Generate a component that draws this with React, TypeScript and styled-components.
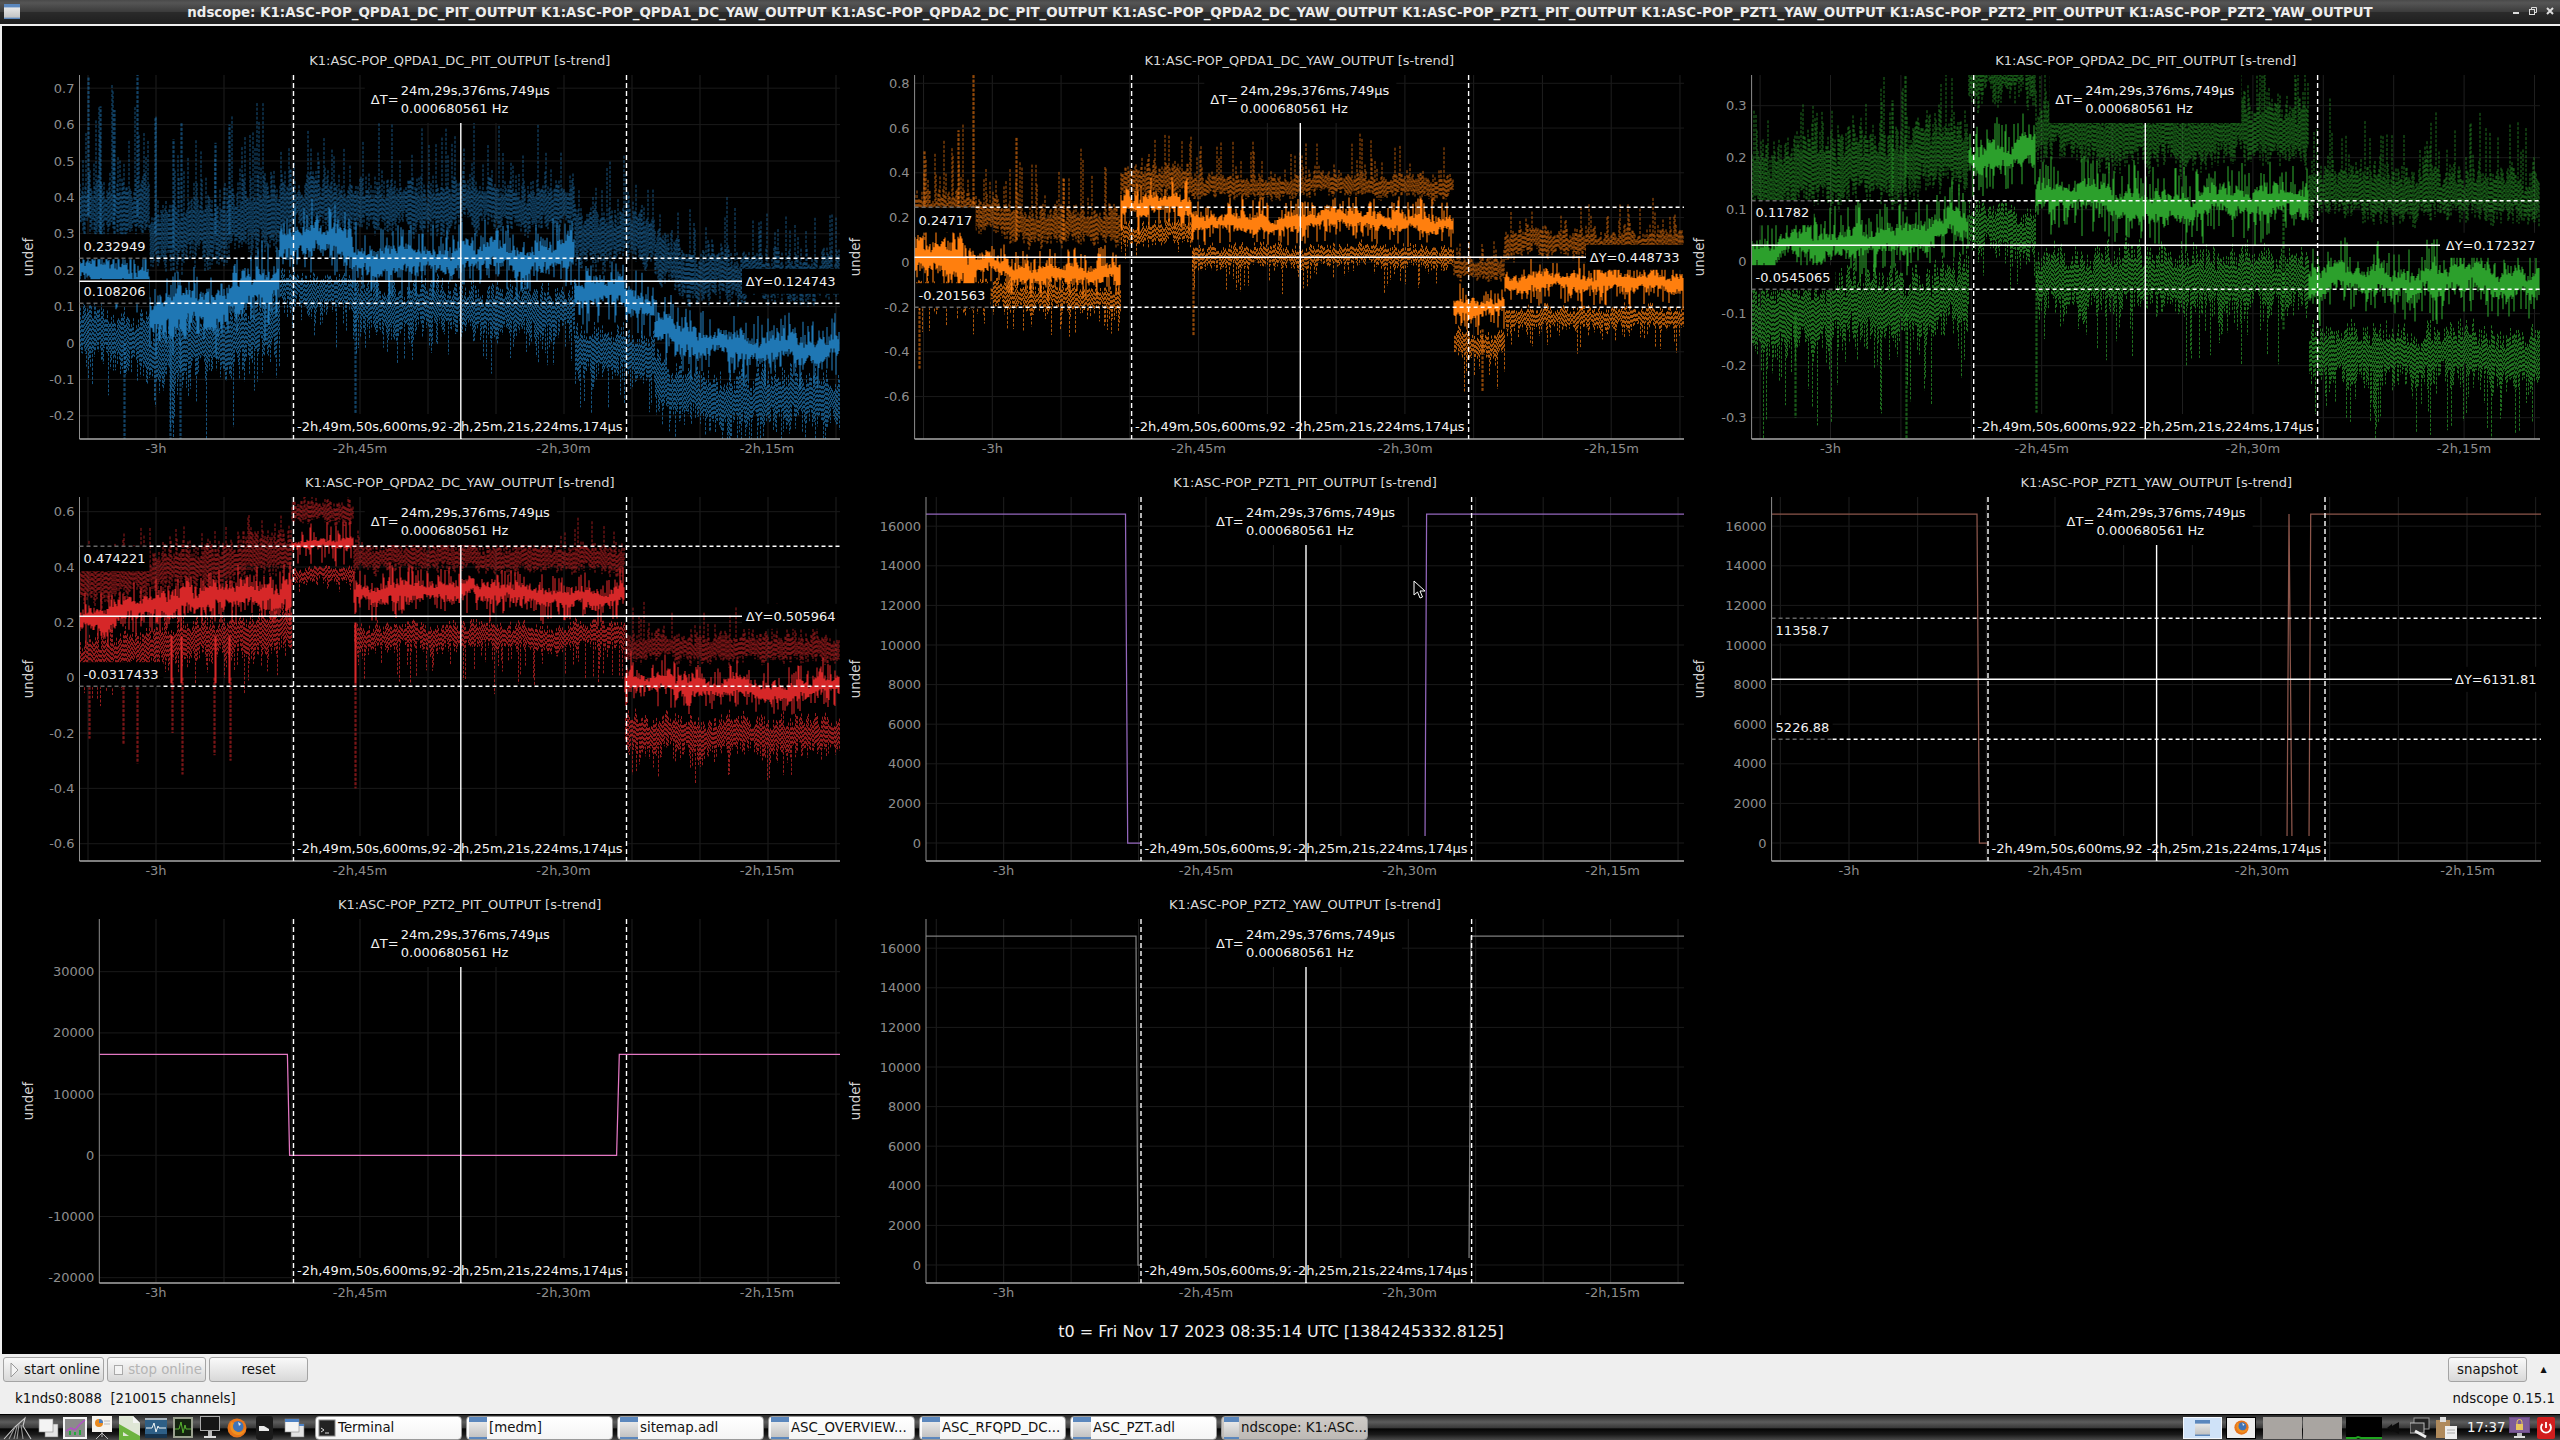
import React, { useMemo } from "react";
import styled, { createGlobalStyle } from "styled-components";

const FONT = `"DejaVu Sans", "Liberation Sans", sans-serif`;

const Global = createGlobalStyle`
  html, body { margin: 0; padding: 0; background: #000; }
  #root { width: 2560px; height: 1440px; overflow: hidden; }
`;

const Page = styled.div`
  position: relative;
  width: 2560px;
  height: 1440px;
  display: flex;
  flex-direction: column;
  font-family: ${FONT};
  font-size: 13.33px;
  background: #000;
`;

/* ---------- window title bar ---------- */
const TitleBar = styled.header`
  height: 24px;
  flex: none;
  display: flex;
  align-items: center;
  justify-content: center;
  position: relative;
  background: linear-gradient(#4a4a4a 0, #555 12%, #3c3c3c 48%, #2a2a2a 52%, #1f1f1f 100%);
  color: #ededed;
  font-weight: bold;
  font-size: 13.39px;
  white-space: nowrap;
  border-bottom: 2px solid #efefef;
`;
const TitleIcon = styled.div`
  position: absolute;
  left: 4px;
  top: 4px;
  line-height: 0;
`;
const WindowButtons = styled.div`
  position: absolute;
  right: 6px;
  top: 7px;
  display: flex;
  gap: 9px;
  align-items: center;
  line-height: 0;
`;

/* ---------- plot grid ---------- */
const Scope = styled.main`
  flex: none;
  height: 1328px;
  border-left: 2px solid #efefef;
  background: #000;
  display: flex;
  flex-direction: column;
  box-sizing: border-box;
  padding-top: 16px;
`;
const PlotGrid = styled.div`
  display: grid;
  grid-template-columns: 841px 847px 870px;
  grid-auto-rows: 422px;
`;
const PlotCell = styled.section`
  display: flex;
  flex-direction: column;
`;
const PlotTitle = styled.div<{ $pad: number; $w: number }>`
  height: 33px;
  line-height: 37px;
  box-sizing: border-box;
  margin-left: ${(p) => p.$pad}px;
  width: ${(p) => p.$w}px;
  text-align: center;
  color: #d8d8d8;
  font-size: 13px;
  white-space: nowrap;
`;
const ChartSvg = styled.svg`
  display: block;
  overflow: visible;
  font-family: ${FONT};
  font-size: 13px;
`;
const TickText = styled.text`
  fill: #8e8e8e;
  dominant-baseline: central;
`;
const AxisName = styled.text`
  fill: #d0d0d0;
  font-size: 13.33px;
  dominant-baseline: central;
  text-anchor: middle;
`;
const CursorText = styled.text`
  fill: #f2f2f2;
  dominant-baseline: central;
`;
const TimeLabel = styled.div`
  flex: 1;
  display: flex;
  align-items: center;
  justify-content: center;
  padding-top: 1px;
  color: #efefef;
  font-size: 16px;
`;

/* ---------- control panel ---------- */
const Controls = styled.footer`
  flex: none;
  height: 60px;
  background: #efefef;
  display: flex;
  flex-direction: column;
  color: #111;
`;
const ButtonRow = styled.div`
  display: flex;
  align-items: center;
  height: 25px;
  margin-top: 3px;
  padding-left: 3px;
  gap: 3px;
`;
const PanelButton = styled.button<{ $w: number; $icon?: boolean }>`
  width: ${(p) => p.$w}px;
  height: 25px;
  box-sizing: border-box;
  padding: 0 0 0 ${(p) => (p.$icon ? 3 : 0)}px;
  display: flex;
  align-items: center;
  justify-content: center;
  gap: 5px;
  border: 1px solid #a4a4a4;
  border-radius: 3px;
  background: linear-gradient(#f9f9f9, #d8d8d8);
  font-family: ${FONT};
  font-size: 13.33px;
  color: ${(p) => (p.disabled ? "#b4b4b4" : "#111")};
  white-space: nowrap;
`;
const RowSpacer = styled.div`
  flex: 1;
`;
const Collapse = styled.span`
  font-size: 8px;
  width: 27px;
  margin-right: 3px;
  text-align: center;
  color: #111;
`;
const StatusRow = styled.div`
  display: flex;
  justify-content: space-between;
  align-items: center;
  height: 32px;
  padding: 1px 5px 0 15px;
  box-sizing: border-box;
  white-space: pre;
`;

/* ---------- desktop task bar ---------- */
const TaskBar = styled.nav`
  flex: 1;
  display: flex;
  align-items: center;
  border-top: 1px solid #000;
  background: linear-gradient(#262626 0, #5c5c5c 28%, #3a3a3a 50%, #050505 56%, #1a1a1a 78%, #4a4a4a 100%);
`;
const Launcher = styled.div`
  display: flex;
  align-items: center;
  width: 315px;
  flex: none;
  padding-left: 3px;
  box-sizing: border-box;
`;
const LaunchSlot = styled.div<{ $w: number }>`
  width: ${(p) => p.$w}px;
  flex: none;
  line-height: 0;
`;
const TaskList = styled.div`
  display: flex;
  gap: 4px;
  flex: none;
`;
const TaskButton = styled.div<{ $active?: boolean }>`
  width: 147px;
  height: 24px;
  box-sizing: border-box;
  display: flex;
  align-items: center;
  gap: 2px;
  padding-left: 2px;
  border: 1px solid #9a9a9a;
  border-radius: 4px;
  background: ${(p) => (p.$active ? "linear-gradient(#cfcbc7, #bdb9b5)" : "linear-gradient(#fff, #f4f4f4)")};
  color: #111;
  font-size: 13.33px;
  white-space: nowrap;
  overflow: hidden;
  line-height: 0;
`;
const TaskText = styled.span`
  line-height: 16px;
`;
const Tray = styled.div`
  margin-left: auto;
  display: flex;
  align-items: center;
  height: 100%;
  width: 377px;
  flex: none;
`;
const TraySlot = styled.div<{ $w: number; $ml?: number; $bg?: string; $edge?: string }>`
  width: ${(p) => p.$w}px;
  margin-left: ${(p) => p.$ml ?? 0}px;
  height: 22px;
  flex: none;
  box-sizing: border-box;
  display: flex;
  align-items: center;
  justify-content: center;
  background: ${(p) => p.$bg ?? "transparent"};
  border: ${(p) => (p.$edge ? `1px solid ${p.$edge}` : "none")};
  line-height: 0;
`;
const Clock = styled.span`
  color: #f4f4f4;
  font-size: 13.33px;
  margin-left: 9px;
  width: 35px;
  white-space: nowrap;
`;
const MousePointer = styled.svg`
  position: absolute;
  left: 1413px;
  top: 580px;
  width: 13px;
  height: 19px;
`;

/* ---------- data ---------- */
type Seg = [number, number, number, number, number, number, number, number, number, number, number?];
type Tick = [number, string];
type Spike = [number, number, number, boolean?];
type HCursors = {
  y1: number; y2: number; mid: number;
  l1: string; l1y: number; l2: string; l2y: number;
  lw1: number; lw2: number; dy: string; dyStart: number;
};
type PlotCfg = {
  ch: string; color: string;
  cellX: number; row: number;
  left: number; right: number;
  c1: number; c2: number; c: number;
  undefX: number;
  y0: number; scale: number; yTicks: Tick[];
  xTicks: number[];
  h?: HCursors;
  segs?: Seg[]; mean?: number; spikes?: Spike[]; seed?: number;
  line?: string;
};

const COLS = [2, 843, 1690];
const COLW = [841, 847, 870];
const tops = [75, 497, 919];

const T1 = [156, 360, 563.5, 767];
const T2 = [992.3, 1198.6, 1405.3, 1611.6];
const T5 = [1003.7, 1206, 1409.6, 1612.6];
const T3 = [1830.5, 2041.7, 2252.8, 2464];
const T6 = [1849, 2055, 2262, 2467.6];

const range = (from: number, to: number, step: number, dec: number): Tick[] => {
  const out: Tick[] = [];
  const n = Math.round((to - from) / step);
  for (let i = 0; i <= n; i++) {
    const v = from + i * step;
    const s = Math.abs(v) < 1e-9 ? "0" : dec ? String(Number(v.toFixed(dec))) : String(Math.round(v));
    out.push([Number(v.toFixed(6)), s]);
  }
  return out;
};

const PLOTS: PlotCfg[] = [
  {
    ch: "K1:ASC-POP_QPDA1_DC_PIT_OUTPUT", color: "#1f77b4", cellX: 0, row: 0,
    left: 79.5, right: 840, c1: 293.5, c2: 626.5, c: 460.8, undefX: 28.5,
    y0: 343, scale: 364, yTicks: range(-0.2, 0.7, 0.1, 1), xTicks: T1,
    h: { y1: 258.3, y2: 303.3, mid: 281.3, l1: "0.232949", l1y: 246.7, l2: "0.108206", l2y: 291.7, lw1: 70, lw2: 70, dy: "ΔY=0.124743", dyStart: 742 },
    segs: [
      [79.5, 150, 0.2, 0.18, 0.18, 0.08, 0.17, 0.08, 0.3, 0.14],
      [150, 280, 0.09, 0.18, 0.18, 0.1, 0.13, 0.09, 0.24, 0.22, 1.4],
      [280, 353, 0.29, 0.27, 0.1, 0.07, 0.14, 0.05, 0.16, 0.1],
      [353, 575, 0.235, 0.235, 0.135, 0.07, 0.145, 0.07, 0.2, 0.12],
      [575, 655, 0.12, 0.12, 0.165, 0.08, 0.15, 0.07, 0.17, 0.12],
      [655, 700, 0.05, 0.0, 0.18, 0.07, 0.15, 0.08, 0.13, 0.1],
      [700, 840, -0.005, -0.01, 0.19, 0.07, 0.15, 0.08, 0.14, 0.1],
    ],
    mean: 0.032, seed: 11,
    spikes: [[355, 0.15, -0.2], [88, 0.35, 0.73], [137, 0.35, 0.74], [100, 0.3, 0.65], [114, 0.3, 0.64], [155, 0.3, 0.62], [173, 0.2, 0.56], [215, 0.3, 0.55], [229, 0.3, 0.6], [124, 0, -0.28], [170, 0, -0.27], [180, 0, -0.28]],
  },
  {
    ch: "K1:ASC-POP_QPDA1_DC_YAW_OUTPUT", color: "#ff7f0e", cellX: 1, row: 0,
    left: 914.6, right: 1684, c1: 1131.6, c2: 1468.6, c: 1300.3, undefX: 855,
    y0: 262.3, scale: 223.75, yTicks: range(-0.6, 0.8, 0.2, 1), xTicks: T2,
    h: { y1: 207.3, y2: 307.3, mid: 257.3, l1: "0.24717", l1y: 220, l2: "-0.201563", l2y: 295.7, lw1: 61, lw2: 76, dy: "ΔY=0.448733", dyStart: 1586 },
    segs: [
      [914.6, 975, 0.03, 0.0, 0.22, 0.08, 0.16, 0.06, 0.3, 0.12, 2.2],
      [975, 1121, 0.0, -0.05, 0.2, 0.08, 0.125, 0.06, 0.25, 0.14, 1.1],
      [1121, 1192, 0.25, 0.26, 0.11, 0.07, 0.12, 0.05, 0.15, 0.08],
      [1192, 1454, 0.19, 0.19, 0.15, 0.05, 0.16, 0.05, 0.18, 0.14],
      [1454, 1505, -0.18, -0.19, 0.16, 0.05, 0.18, 0.06, 0.1, 0.18],
      [1505, 1684, -0.09, -0.08, 0.17, 0.06, 0.16, 0.05, 0.15, 0.12],
    ],
    mean: 0.035, seed: 23,
    spikes: [[973, 0.2, 0.84], [958, 0.2, 0.59], [1016, 0.1, 0.56], [1063, 0.1, 0.38], [924, 0.1, 0.5], [1193, 0.05, -0.33], [919, -0.2, -0.48], [1482, -0.3, -0.58]],
  },
  {
    ch: "K1:ASC-POP_QPDA2_DC_PIT_OUTPUT", color: "#2ca02c", cellX: 2, row: 0,
    left: 1751.6, right: 2540, c1: 1973.7, c2: 2317.6, c: 2145.3, undefX: 1699,
    y0: 261.7, scale: 520, yTicks: range(-0.3, 0.3, 0.1, 1), xTicks: T3,
    h: { y1: 200.7, y2: 289.3, mid: 245.3, l1: "0.11782", l1y: 212.7, l2: "-0.0545065", l2y: 277.7, lw1: 62, lw2: 84, dy: "ΔY=0.172327", dyStart: 2440 },
    segs: [
      [1751.6, 1969, 0.01, 0.07, 0.14, 0.07, 0.13, 0.07, 0.15, 0.15],
      [1969, 2036, 0.2, 0.2, 0.17, 0.07, 0.14, 0.05, 0.1, 0.08],
      [2036, 2309, 0.115, 0.115, 0.13, 0.06, 0.15, 0.06, 0.14, 0.12],
      [2309, 2540, -0.04, -0.045, 0.17, 0.05, 0.14, 0.055, 0.14, 0.12],
    ],
    mean: 0.024, seed: 37,
    spikes: [[2036, 0.0, -0.29], [2283, 0.1, -0.13], [1905, 0.1, 0.36], [1892, 0.1, 0.31], [1906, -0.1, -0.34], [1795, -0.1, -0.3]],
  },
  {
    ch: "K1:ASC-POP_QPDA2_DC_YAW_OUTPUT", color: "#d62728", cellX: 0, row: 1,
    left: 79.5, right: 840, c1: 293.5, c2: 626.5, c: 460.8, undefX: 28.5,
    y0: 677.7, scale: 276.7, yTicks: range(-0.6, 0.6, 0.2, 1), xTicks: T1,
    h: { y1: 546.3, y2: 686.3, mid: 616.3, l1: "0.474221", l1y: 558.7, l2: "-0.0317433", l2y: 674.7, lw1: 70, lw2: 84, dy: "ΔY=0.505964", dyStart: 742 },
    segs: [
      [79.5, 292, 0.2, 0.32, 0.13, 0.08, 0.14, 0.08, 0.1, 0.12, 1.4],
      [292, 354, 0.485, 0.48, 0.11, 0.04, 0.11, 0.03, 0.05, 0.05, 0.5],
      [354, 625, 0.295, 0.3, 0.13, 0.05, 0.15, 0.05, 0.1, 0.15],
      [625, 840, -0.03, -0.04, 0.14, 0.05, 0.17, 0.07, 0.12, 0.12],
    ],
    mean: 0.03, seed: 41,
    spikes: [
      [355, 0.2, -0.02, true], [355, -0.02, -0.4], [89, 0, -0.22], [123, 0, -0.24], [137, 0, -0.31],
      [171, 0.15, -0.02, true], [172, 0, -0.2], [181, 0.15, -0.02, true], [182, 0, -0.35],
      [215, 0.15, -0.02, true], [214, 0, -0.28], [229, 0.15, -0.02, true], [230, 0, -0.3],
    ],
  },
  {
    ch: "K1:ASC-POP_PZT1_PIT_OUTPUT", color: "#9467bd", cellX: 1, row: 1,
    left: 926, right: 1684, c1: 1141, c2: 1471.6, c: 1306, undefX: 855,
    y0: 843, scale: 0.0198, yTicks: range(0, 16000, 2000, 0), xTicks: T5,
    line: "M926 514H1125.5L1127.7 843H1141M1425 843L1426.6 514H1684",
  },
  {
    ch: "K1:ASC-POP_PZT1_YAW_OUTPUT", color: "#8c564b", cellX: 2, row: 1,
    left: 1771.6, right: 2541, c1: 1988, c2: 2325, c: 2156.6, undefX: 1699,
    y0: 843, scale: 0.0198, yTicks: range(0, 16000, 2000, 0), xTicks: T6,
    h: { y1: 618.3, y2: 739.3, mid: 679.3, l1: "11358.7", l1y: 630.7, l2: "5226.88", l2y: 727.7, lw1: 61, lw2: 61, dy: "ΔY=6131.81", dyStart: 2452 },
    line: "M1771.6 514H1977L1979.4 843H1988M2287 843L2289 514L2292 843M2309 843L2310.7 514H2541",
  },
  {
    ch: "K1:ASC-POP_PZT2_PIT_OUTPUT", color: "#e377c2", cellX: 0, row: 2,
    left: 99.3, right: 840, c1: 293.5, c2: 626.5, c: 460.8, undefX: 28.5,
    y0: 1155.3, scale: 0.00612, yTicks: range(-20000, 30000, 10000, 0), xTicks: T1,
    line: "M99.3 1054.3H287.4L289.6 1155.3H616.6L619.3 1054.3H840",
  },
  {
    ch: "K1:ASC-POP_PZT2_YAW_OUTPUT", color: "#7f7f7f", cellX: 1, row: 2,
    left: 926, right: 1684, c1: 1141, c2: 1471.6, c: 1306, undefX: 855,
    y0: 1265, scale: 0.0198, yTicks: range(0, 16000, 2000, 0), xTicks: T5,
    line: "M926 936H1136L1138 1265H1141M1469 1265L1471 936H1684",
  },
];

/* ---------- trace synthesis ---------- */
const mulberry = (a: number) => () => {
  a |= 0; a = (a + 0x6d2b79f5) | 0;
  let t = Math.imul(a ^ (a >>> 15), 1 | a);
  t = (t + Math.imul(t ^ (t >>> 7), 61 | t)) ^ t;
  return ((t ^ (t >>> 14)) >>> 0) / 4294967296;
};

function buildTrace(p: PlotCfg) {
  const r = mulberry(p.seed ?? 1);
  const Y = (v: number) => (p.y0 - v * p.scale).toFixed(1);
  let mean = "", band = "";
  let w = 0, eu = 0, el = 0;
  const mn = p.mean ?? 0.03;
  for (const s of p.segs ?? []) {
    const [x0, x1, v0, v1, du, hu, dl, hl, su, sl, extra] = s;
    const k = extra ?? 1;
    for (let x = Math.round(x0); x < x1; x++) {
      const t = (x - x0) / (x1 - x0);
      const base = v0 + (v1 - v0) * t;
      w = 0.96 * w + (r() - 0.5) * mn * 0.42;
      eu = 0.9 * eu + (r() - 0.5) * 0.2;
      el = 0.9 * el + (r() - 0.5) * 0.2;
      const m = base + w * k;
      const wave = 0.6 + 0.5 * Math.abs(Math.sin(x * 0.09 + Math.sin(x * 0.023) * 2));
      const a = mn * k * wave * (0.45 + r() * 0.9);
      const b = mn * k * wave * (0.45 + r() * 0.9);
      const ex = r() < 0.3 ? mn * 2.3 * r() : 0;
      const ex2 = r() < 0.3 ? mn * 2.3 * r() : 0;
      mean += `M${x} ${Y(m + a + ex)}V${Y(m - b - ex2)}`;

      const comb = Math.abs(Math.sin(x * 0.33 + 3 * Math.sin(x * 0.071)));
      const cu = base + du + eu * hu + 0.3 * w;
      let tp = cu + hu * (0.35 + 0.65 * r()) * (0.7 + 0.6 * comb);
      const bt = cu - hu * (0.35 + 0.65 * r()) * (0.7 + 0.5 * comb);
      if (r() < 0.3) tp += su * Math.pow(r(), 2.2);
      band += `M${x} ${Y(tp)}V${Y(bt)}`;

      const cl = base - dl + el * hl + 0.3 * w;
      const t2 = cl + hl * (0.35 + 0.65 * r()) * (0.7 + 0.5 * comb);
      let b2 = cl - hl * (0.35 + 0.65 * r()) * (0.7 + 0.6 * comb);
      if (r() < 0.3) b2 -= sl * Math.pow(r(), 2.2);
      band += `M${x + 0.5} ${Y(t2)}V${Y(b2)}`;
    }
  }
  for (const [x, a, b, bright] of p.spikes ?? []) {
    const d = `M${x} ${Y(a)}V${Y(b)}`;
    if (bright) mean += d + `M${x + 1} ${Y(a)}V${Y(b)}`;
    else band += d + `M${x + 1} ${Y(a)}V${Y(b)}`;
  }
  return { mean, band };
}

/* ---------- icons ---------- */
const WindowIcon = ({ w = 16, h = 15 }: { w?: number; h?: number }) => (
  <svg width={w} height={h} viewBox="0 0 16 22" preserveAspectRatio="none">
    <defs>
      <linearGradient id="wgrad" x1="0" y1="0" x2="0" y2="1">
        <stop offset="0" stopColor="#f4f4f4" />
        <stop offset="1" stopColor="#bdbdbd" />
      </linearGradient>
    </defs>
    <rect width="16" height="22" fill="url(#wgrad)" />
    <rect width="16" height="5" fill="#5b87bd" />
    <rect y="20" width="16" height="2" fill="#5b87bd" />
  </svg>
);
const TerminalIcon = () => (
  <svg width="18" height="18" viewBox="0 0 18 18">
    <rect x="1" y="1" width="16" height="16" fill="#222" stroke="#888" />
    <path d="M3 9l3 2-3 2" stroke="#ddd" fill="none" />
    <path d="M7 14h4" stroke="#ddd" />
  </svg>
);
const Firefox = ({ s = 20 }: { s?: number }) => (
  <svg width={s} height={s} viewBox="0 0 20 20">
    <circle cx="10" cy="10" r="9.5" fill="#e8751a" />
    <circle cx="11" cy="8.5" r="5.5" fill="#3f74b8" />
    <path d="M4 4C2 9 4 16 10 17c5 .5 8-3 8.5-7-2 4-6 5-9 3.5C6 12 5 8 7 5z" fill="#f0901f" />
    <path d="M11 4l3 2-2 2z" fill="#e9ecef" />
  </svg>
);
const KaliIcon = () => (
  <svg width="30" height="24" viewBox="0 0 30 24" fill="none" stroke="#c8c8c8" strokeWidth="1.1">
    <path d="M1 23L12 11 22 2l-2 8 8 13" />
    <path d="M12 11L6 23M16 8l-2 15M18 9l2 14M14 10l-3 13" stroke="#999" />
  </svg>
);
const StackIcon = ({ blue }: { blue?: boolean }) => (
  <svg width="21" height="20" viewBox="0 0 21 20">
    <rect x="7" y="6" width="13" height="13" fill="#e4e4e4" stroke="#777" strokeWidth=".6" />
    <rect x="1" y="1" width="14" height="13" fill="#f3f3f3" stroke="#888" strokeWidth=".6" />
    {blue && <rect x="1" y="1" width="14" height="3" fill="#4e82c4" />}
    {blue && <rect x="15" y="6" width="5" height="2" fill="#4e82c4" />}
  </svg>
);
const ChartIcon = () => (
  <svg width="24" height="22" viewBox="0 0 24 22">
    <rect width="24" height="22" fill="#f5f5f5" />
    <rect x="2" y="2" width="20" height="18" fill="#8b8b8b" />
    <path d="M3 14l5-3 4 2 5-6 5-4" stroke="#b44fc9" strokeWidth="1.4" fill="none" />
    <path d="M3 18h3v-4h2v4h3v-3h2v3h3v-5h2v5h3" fill="#22a83a" />
  </svg>
);
const BoardIcon = () => (
  <svg width="20" height="24" viewBox="0 0 20 24">
    <rect x="0" y="0" width="20" height="16" fill="#f5f3ee" />
    <circle cx="7" cy="7" r="4" fill="#e98a1f" />
    <path d="M7 7V3a4 4 0 0 1 4 4z" fill="#4a7fc1" />
    <path d="M12 5h6M12 8h6" stroke="#bbb" />
    <path d="M10 16v5M10 17l-6 6M10 17l6 6" stroke="#bbb" />
  </svg>
);
const DrawIcon = () => (
  <svg width="21" height="24" viewBox="0 0 21 24">
    <path d="M0 0h14l7 7v17H0z" fill="#dfe6d6" />
    <path d="M0 8l21 12v4H0z" fill="#6cb33f" />
    <path d="M4 16v4h6z" fill="#dfe6d6" />
    <path d="M14 0v7h7z" fill="#f5f5f5" />
  </svg>
);
const EcgIcon = () => (
  <svg width="22" height="20" viewBox="0 0 22 20">
    <rect width="22" height="20" fill="#2e5f86" />
    <rect y="0" width="22" height="2" fill="#a8b4bd" />
    <rect y="16" width="22" height="4" fill="#17344e" />
    <path d="M1 10h6l2-5 2 9 2-6 1 2h7" stroke="#f1f5f5" fill="none" />
  </svg>
);
const ScopeIcon = () => (
  <svg width="20" height="21" viewBox="0 0 20 21">
    <rect width="20" height="21" fill="#9aa08f" />
    <rect x="2" y="2" width="16" height="17" fill="#142310" />
    <path d="M2 12h4l2-7 2 11 2-8 1 4h5" stroke="#58b530" fill="none" />
  </svg>
);
const DisplayIcon = () => (
  <svg width="20" height="24" viewBox="0 0 20 24">
    <rect width="20" height="15" fill="#aaa" />
    <rect x="1" y="1" width="18" height="13" fill="#161616" />
    <rect x="8" y="15" width="4" height="5" fill="#bbb" />
    <rect x="4" y="20" width="12" height="2" fill="#ddd" />
  </svg>
);
const DarkBox = () => (
  <svg width="17" height="24" viewBox="0 0 17 24">
    <rect width="17" height="24" rx="3" fill="#1b1b1b" />
    <path d="M3 10h5l5 3v2H3z" fill="#e9e9e9" />
  </svg>
);
const SpeakerIcon = () => (
  <svg width="14" height="14" viewBox="0 0 14 14">
    <path d="M0 7l5-4v2l7-4v12L5 9v2z" fill="#0c0c0c" />
  </svg>
);
const NetworkIcon = () => (
  <svg width="20" height="22" viewBox="0 0 20 22">
    <rect x="4" y="1" width="15" height="11" fill="#222" stroke="#999" />
    <rect x="0" y="6" width="14" height="10" fill="#333" stroke="#bbb" />
    <path d="M5 14l11 6" stroke="#eee" strokeWidth="3" />
  </svg>
);
const ClipIcon = () => (
  <svg width="22" height="22" viewBox="0 0 22 22">
    <rect x="0" y="3" width="14" height="18" fill="#b08a5b" />
    <rect x="4" y="0" width="6" height="5" fill="#ddd" />
    <rect x="9" y="9" width="12" height="13" fill="#eee" />
    <path d="M11 13h8M11 16h8" stroke="#aaa" />
  </svg>
);
const LockIcon = () => (
  <svg width="21" height="22" viewBox="0 0 21 22">
    <rect width="21" height="16" fill="#6c4a86" />
    <rect x="1" y="1" width="19" height="14" fill="#7d5c99" />
    <rect x="7" y="7" width="7" height="6" fill="#e7c65e" />
    <path d="M8 7V5a2.5 2.5 0 0 1 5 0v2" stroke="#e7c65e" fill="none" />
    <rect x="8" y="16" width="5" height="3" fill="#bbb" />
    <rect x="5" y="19" width="11" height="2" fill="#ddd" />
  </svg>
);
const PowerIcon = () => (
  <svg width="18" height="22" viewBox="0 0 18 22">
    <rect width="18" height="22" rx="2" fill="#d21e1e" />
    <path d="M5.5 7a5 5 0 1 0 7 0" stroke="#fff" strokeWidth="1.8" fill="none" />
    <path d="M9 5v6" stroke="#fff" strokeWidth="1.8" />
  </svg>
);
const LoadGraph = () => (
  <svg width="36" height="22" viewBox="0 0 36 22">
    <rect width="36" height="22" fill="#000" />
    <path d="M0 21h10l2-1 3 1h21" stroke="#1fa51f" strokeWidth="2" fill="none" />
  </svg>
);
const PlayGlyph = () => (
  <svg width="9" height="16" viewBox="0 0 9 16">
    <path d="M1 1l7 7-7 7z" fill="#f4f4f4" stroke="#999" />
  </svg>
);
const StopGlyph = () => (
  <svg width="9" height="10" viewBox="0 0 9 10">
    <rect x=".5" y=".5" width="8" height="9" fill="#f4f4f4" stroke="#aaa" />
  </svg>
);

/* ---------- one plot ---------- */
const Plot = ({ p }: { p: PlotCfg }) => {
  const top = tops[p.row];
  const bottom = top + 364;
  const cellX = COLS[p.cellX];
  const w = COLW[p.cellX];
  const id = `clip-${p.cellX}-${p.row}`;
  const trace = useMemo(() => (p.segs ? buildTrace(p) : null), [p]);
  const step = (p.xTicks[1] - p.xTicks[0]) / 3;
  const minor: number[] = [];
  for (let x = p.xTicks[0] - 3 * step; x < p.right; x += step) if (x > p.left) minor.push(x);
  const box = "#000";
  const textEnd = p.c2 - 4;
  const room = p.c2 - p.c1 - 184;
  const startText = room >= 158 ? "-2h,49m,50s,600ms,922" : "-2h,49m,50s,600ms,92";
  return (
    <PlotCell>
      <PlotTitle $pad={p.left - cellX} $w={p.right - p.left}>
        {p.ch} [s-trend]
      </PlotTitle>
      <ChartSvg width={w} height={389} viewBox={`${cellX} ${top} ${w} 389`}>
        <clipPath id={id}>
          <rect x={p.left} y={top} width={p.right - p.left} height={364} />
        </clipPath>
        <AxisName transform={`translate(${p.undefX} ${top + 182}) rotate(-90)`}>undef</AxisName>
        <g stroke="#1f1f1f" strokeWidth="1">
          {minor.map((x) => (
            <line key={x} x1={x} x2={x} y1={top} y2={bottom} />
          ))}
        </g>
        <g stroke="#1a1a1a" strokeWidth="1">
          {p.yTicks.map(([v]) => (
            <line key={v} x1={p.left} x2={p.right} y1={p.y0 - v * p.scale} y2={p.y0 - v * p.scale} />
          ))}
        </g>
        <g clipPath={`url(#${id})`}>
          {trace && (
            <>
              <path d={trace.band} stroke={p.color} strokeWidth="0.9" strokeOpacity="0.78" strokeDasharray="3 1.5" fill="none" />
              <path d={trace.mean} stroke={p.color} strokeWidth="1.1" fill="none" />
            </>
          )}
          {p.line && <path d={p.line} stroke={p.color} strokeWidth="1.25" fill="none" />}
        </g>
        {/* label backings */}
        <rect x={p.c - 96} y={top} width={192} height={48} fill={box} />
        <rect x={p.c1} y={bottom - 25} width={p.c2 - p.c1} height={24} fill={box} />
        {p.h && (
          <>
            <rect x={p.left} y={p.h.l1y - 12.5} width={p.h.lw1} height={25} fill={box} />
            <rect x={p.left} y={p.h.l2y - 12.5} width={p.h.lw2} height={25} fill={box} />
            <rect x={p.h.dyStart} y={p.h.mid - 12.5} width={p.right - p.h.dyStart} height={25} fill={box} />
          </>
        )}
        {/* axes */}
        <line x1={p.left} x2={p.left} y1={top} y2={bottom} stroke="#8e8e8e" strokeWidth="1" />
        <line x1={p.left} x2={p.right} y1={bottom} y2={bottom} stroke="#a8a8a8" strokeWidth="1.5" />
        {p.yTicks.map(([v, s]) => (
          <TickText key={v} x={p.left - 5} y={p.y0 - v * p.scale} textAnchor="end">
            {s}
          </TickText>
        ))}
        {["-3h", "-2h,45m", "-2h,30m", "-2h,15m"].map((s, i) => (
          <TickText key={s} x={p.xTicks[i]} y={bottom + 9} textAnchor="middle">
            {s}
          </TickText>
        ))}
        {/* time cursors */}
        <g stroke="#fff" strokeWidth="1.4">
          <line x1={p.c1} x2={p.c1} y1={top} y2={bottom} strokeDasharray="5 3" />
          <line x1={p.c2} x2={p.c2} y1={top} y2={bottom} strokeDasharray="5 3" />
          <line x1={p.c} x2={p.c} y1={top + 48} y2={bottom} />
        </g>
        {/* value cursors */}
        {p.h && (
          <g strokeWidth="1.4">
            <line x1={p.left} x2={p.left + p.h.lw1} y1={p.h.y1} y2={p.h.y1} stroke="#666" strokeDasharray="4 3" />
            <line x1={p.left + p.h.lw1} x2={p.right} y1={p.h.y1} y2={p.h.y1} stroke="#fff" strokeDasharray="4 3" />
            <line x1={p.left} x2={p.left + p.h.lw2} y1={p.h.y2} y2={p.h.y2} stroke="#666" strokeDasharray="4 3" />
            <line x1={p.left + p.h.lw2} x2={p.right} y1={p.h.y2} y2={p.h.y2} stroke="#fff" strokeDasharray="4 3" />
            <line x1={p.left} x2={p.h.dyStart} y1={p.h.mid} y2={p.h.mid} stroke="#fff" />
          </g>
        )}
        {/* ΔT read-out */}
        <CursorText x={p.c - 90} y={top + 24}>ΔT=</CursorText>
        <CursorText x={p.c - 60} y={top + 15}>24m,29s,376ms,749µs</CursorText>
        <CursorText x={p.c - 60} y={top + 33.7}>0.000680561 Hz</CursorText>
        <CursorText x={p.c1 + 3.5} y={bottom - 12.3}>{startText}</CursorText>
        <rect x={textEnd - 177} y={bottom - 25} width={177} height={24} fill={box} />
        <line x1={p.c} x2={p.c} y1={bottom - 25} y2={bottom} stroke="#fff" strokeWidth="1.4" />
        <CursorText x={textEnd} y={bottom - 12.3} textAnchor="end">-2h,25m,21s,224ms,174µs</CursorText>
        {p.h && (
          <>
            <CursorText x={p.left + 4} y={p.h.l1y}>{p.h.l1}</CursorText>
            <CursorText x={p.left + 4} y={p.h.l2y}>{p.h.l2}</CursorText>
            <CursorText x={p.right - 4.5} y={p.h.mid} textAnchor="end">{p.h.dy}</CursorText>
          </>
        )}
      </ChartSvg>
    </PlotCell>
  );
};

const TASKS = ["Terminal", "[medm]", "sitemap.adl", "ASC_OVERVIEW...", "ASC_RFQPD_DC...", "ASC_PZT.adl", "ndscope: K1:ASC..."];

const TITLE =
  "ndscope: K1:ASC-POP_QPDA1_DC_PIT_OUTPUT K1:ASC-POP_QPDA1_DC_YAW_OUTPUT K1:ASC-POP_QPDA2_DC_PIT_OUTPUT K1:ASC-POP_QPDA2_DC_YAW_OUTPUT K1:ASC-POP_PZT1_PIT_OUTPUT K1:ASC-POP_PZT1_YAW_OUTPUT K1:ASC-POP_PZT2_PIT_OUTPUT K1:ASC-POP_PZT2_YAW_OUTPUT";

export default function App() {
  return (
    <Page>
      <Global />
      <TitleBar>
        <TitleIcon>
          <WindowIcon />
        </TitleIcon>
        {TITLE}
        <WindowButtons>
          <svg width="8" height="8" viewBox="0 0 8 8"><rect x="1" y="5" width="6" height="2" fill="#ddd" /></svg>
          <svg width="8" height="8" viewBox="0 0 8 8" fill="none" stroke="#ddd"><rect x=".5" y="2.5" width="5" height="5" /><path d="M2.5 2V.5h5v5H6" /></svg>
          <svg width="8" height="8" viewBox="0 0 8 8"><path d="M1 1l6 6M7 1L1 7" stroke="#ddd" strokeWidth="2" /></svg>
        </WindowButtons>
      </TitleBar>
      <Scope>
        <PlotGrid>
          {PLOTS.map((p) => (
            <Plot key={p.ch} p={p} />
          ))}
        </PlotGrid>
        <TimeLabel>t0 = Fri Nov 17 2023 08:35:14 UTC [1384245332.8125]</TimeLabel>
      </Scope>
      <Controls>
        <ButtonRow>
          <PanelButton $w={101} $icon><PlayGlyph />start online</PanelButton>
          <PanelButton $w={99} $icon disabled><StopGlyph />stop online</PanelButton>
          <PanelButton $w={99}>reset</PanelButton>
          <RowSpacer />
          <PanelButton $w={79}>snapshot</PanelButton>
          <Collapse>▲</Collapse>
        </ButtonRow>
        <StatusRow>
          <span>k1nds0:8088  [210015 channels]</span>
          <span>ndscope 0.15.1</span>
        </StatusRow>
      </Controls>
      <TaskBar>
        <Launcher>
          <LaunchSlot $w={35}><KaliIcon /></LaunchSlot>
          <LaunchSlot $w={25}><StackIcon /></LaunchSlot>
          <LaunchSlot $w={29}><ChartIcon /></LaunchSlot>
          <LaunchSlot $w={27}><BoardIcon /></LaunchSlot>
          <LaunchSlot $w={26}><DrawIcon /></LaunchSlot>
          <LaunchSlot $w={28}><EcgIcon /></LaunchSlot>
          <LaunchSlot $w={27}><ScopeIcon /></LaunchSlot>
          <LaunchSlot $w={27}><DisplayIcon /></LaunchSlot>
          <LaunchSlot $w={29}><Firefox /></LaunchSlot>
          <LaunchSlot $w={28}><DarkBox /></LaunchSlot>
          <LaunchSlot $w={28}><StackIcon blue /></LaunchSlot>
        </Launcher>
        <TaskList>
          {TASKS.map((t, i) => (
            <TaskButton key={t} $active={i === TASKS.length - 1}>
              {i === 0 ? <TerminalIcon /> : <WindowIcon w={18} h={22} />}
              <TaskText>{t}</TaskText>
            </TaskButton>
          ))}
        </TaskList>
        <Tray>
          <TraySlot $w={39} $bg="#cfe2f8" $edge="#f4f8fd"><WindowIcon w={15} h={16} /></TraySlot>
          <TraySlot $w={30} $ml={4} $bg="#eee" $edge="#000"><Firefox s={15} /></TraySlot>
          <TraySlot $w={39} $ml={7} $bg="#a9a5a1" />
          <TraySlot $w={39} $ml={1} $bg="#a9a5a1" />
          <TraySlot $w={36} $ml={4}><LoadGraph /></TraySlot>
          <TraySlot $w={15} $ml={4}><SpeakerIcon /></TraySlot>
          <TraySlot $w={20} $ml={9}><NetworkIcon /></TraySlot>
          <TraySlot $w={22} $ml={6}><ClipIcon /></TraySlot>
          <Clock>17:37</Clock>
          <TraySlot $w={21} $ml={7}><LockIcon /></TraySlot>
          <TraySlot $w={18} $ml={7}><PowerIcon /></TraySlot>
        </Tray>
      </TaskBar>
      <MousePointer viewBox="0 0 13 19">
        <path d="M1 1v14l3.5-3 2.5 6 2.5-1-2.5-6h5z" fill="#000" stroke="#fff" strokeWidth="1" />
      </MousePointer>
    </Page>
  );
}
